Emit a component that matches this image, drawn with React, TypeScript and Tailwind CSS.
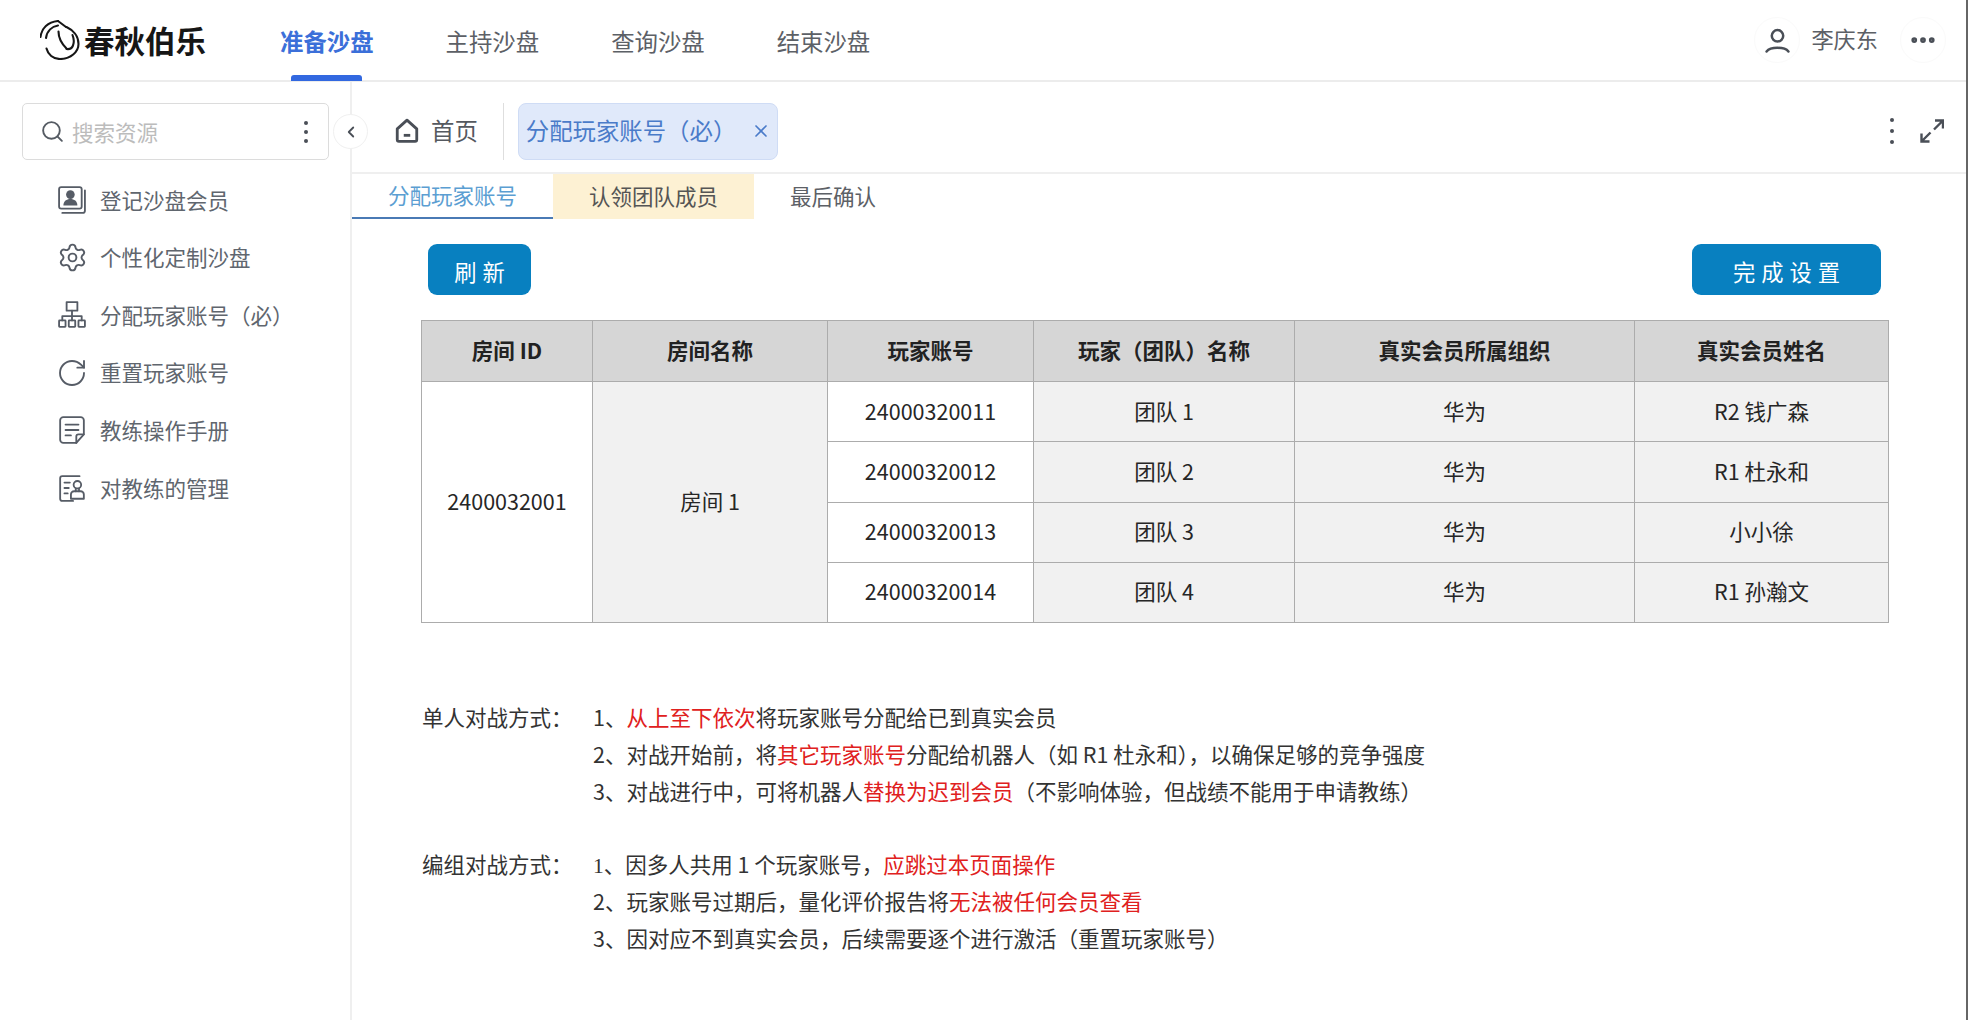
import { RotateCw, Search, Settings, X, ChevronLeft, MoreHorizontal } from "lucide-react";
import type { ReactNode } from "react";

const NAV_ITEMS = ["准备沙盘", "主持沙盘", "查询沙盘", "结束沙盘"];

function IconFrame({ children }: { children: ReactNode }) {
  return (
    <svg
      viewBox="0 0 26 26"
      fill="none"
      stroke="currentColor"
      strokeWidth="1.700"
      strokeLinecap="round"
      strokeLinejoin="round"
      className="h-[28px] w-[28px] shrink-0"
    >
      {children}
    </svg>
  );
}

const MENU_ITEMS: { label: string; icon: ReactNode }[] = [
  {
    label: "登记沙盘会员",
    icon: (
      <IconFrame>
        <rect x="1" y="1" width="21" height="20" rx="2" />
        <path d="M25 4v19a2 2 0 0 1-2 2H4" />
        <circle cx="11.5" cy="8" r="4" fill="currentColor" stroke="none" />
        <path d="M5 18c0-4 3-6 6.500-6s6.500 2 6.500 6z" fill="currentColor" stroke="none" />
      </IconFrame>
    ),
  },
  { label: "个性化定制沙盘", icon: <Settings size={31} strokeWidth={1.500} className="shrink-0" /> },
  {
    label: "分配玩家账号（必）",
    icon: (
      <IconFrame>
        <rect x="8" y="1" width="10" height="8" />
        <path d="M13 9v9M4 18v-4h18v4" />
        <rect x="1" y="18" width="6" height="6" rx="0.500" />
        <rect x="10" y="18" width="6" height="6" rx="0.500" />
        <rect x="19" y="18" width="6" height="6" rx="0.500" />
      </IconFrame>
    ),
  },
  { label: "重置玩家账号", icon: <RotateCw size={32} strokeWidth={1.400} className="shrink-0" /> },
  {
    label: "教练操作手册",
    icon: (
      <IconFrame>
        <path d="M5 1h16a3 3 0 0 1 3 3v13l-7 8H5a3 3 0 0 1-3-3V4a3 3 0 0 1 3-3z" />
        <path d="M7 8h12M7 13h12M7 18h5M24 17h-5a2 2 0 0 0-2 2v6" />
      </IconFrame>
    ),
  },
  {
    label: "对教练的管理",
    icon: (
      <IconFrame>
        <path d="M20 2H4a2 2 0 0 0-2 2v19a2 2 0 0 0 2 2h10" />
        <path d="M6 8h5M6 13h4M6 18h3" />
        <circle cx="18" cy="10" r="3.500" />
        <path d="M16.500 13.500V16M19.500 13.500V16" />
        <path d="M12 23v-4a3 3 0 0 1 3-3h6a3 3 0 0 1 3 3v4z" />
      </IconFrame>
    ),
  },
];

const ROWS = [
  { account: "24000320011", team: "团队 1", org: "华为", name: "R2 钱广森" },
  { account: "24000320012", team: "团队 2", org: "华为", name: "R1 杜永和" },
  { account: "24000320013", team: "团队 3", org: "华为", name: "小小徐" },
  { account: "24000320014", team: "团队 4", org: "华为", name: "R1 孙瀚文" },
];

const HEADERS = [
  { title: "房间 ID", width: "w-[171px]" },
  { title: "房间名称", width: "w-[235px]" },
  { title: "玩家账号", width: "w-[206px]" },
  { title: "玩家（团队）名称", width: "w-[261px]" },
  { title: "真实会员所属组织", width: "w-[340px]" },
  { title: "真实会员姓名", width: "w-[254px]" },
];

function Logo() {
  return (
    <div className="flex items-center gap-[4px] text-[#161616]">
      <svg viewBox="0 0 40 40" fill="none" stroke="currentColor" strokeWidth="2.100" strokeLinecap="round" strokeLinejoin="round" className="h-[40px] w-[40px]">
        <path d="M0.500 17C1.500 8 8 2 18 1" />
        <path d="M6 18C7 11 12 6.500 18 5.500" />
        <path d="M18 1l8 6" />
        <path d="M26.500 7C33 10 38.500 16 38.500 24c0 8-8 15-18.500 15C13 39 8 34.500 6.500 28.500" />
        <path d="M18.500 11.500c0 6 3 12 8 17" />
        <path d="M32.500 15c1.500 4 1.500 8 .5 10.500-1 2.500-3.500 4-6.500 3.500" />
      </svg>
      <span className="text-[30.500px] leading-none font-semibold">春秋伯乐</span>
    </div>
  );
}

function Dots({ gap }: { gap: string }) {
  return (
    <span className={`flex flex-col items-center ${gap}`}>
      <span className="h-[4px] w-[4px] rounded-full bg-current" />
      <span className="h-[4px] w-[4px] rounded-full bg-current" />
      <span className="h-[4px] w-[4px] rounded-full bg-current" />
    </span>
  );
}

function Header() {
  return (
    <header className="flex h-[82px] shrink-0 items-center border-b-2 border-[#ececec] pr-[20px] pl-[40px]">
      <Logo />
      <nav className="ml-[74px] flex h-full gap-[72px]">
        {NAV_ITEMS.map((item, i) => (
          <div
            key={item}
            className={`relative flex h-full items-center pt-[4px] text-[23.400px] ${
              i === 0 ? "font-bold text-[#3b6fd9]" : "text-[#5c6066]"
            }`}
          >
            {item}
            {i === 0 && (
              <span className="absolute -bottom-[1px] left-[11px] h-[6px] w-[71px] rounded-t-[3px] bg-[#3268e0]" />
            )}
          </div>
        ))}
      </nav>
      <div className="ml-auto flex items-center">
        <div className="flex h-[46px] w-[46px] items-center justify-center rounded-full border border-[#fafafa] text-[#4a4f57]">
          <svg viewBox="0 0 24 24" fill="none" stroke="currentColor" strokeWidth="2.400" strokeLinecap="round" className="h-[25px] w-[25px]">
            <circle cx="12" cy="7.500" r="5.500" />
            <path d="M1.500 22.500c2-2.500 5.500-3.500 10.500-3.500s8.500 1 10.500 3.500" />
          </svg>
        </div>
        <span className="ml-[11px] pb-[2px] text-[22.200px] text-[#5c6066]">李庆东</span>
        <div className="ml-[22px] flex h-[46px] w-[46px] items-center justify-center rounded-full border border-[#fafafa] text-[#4a4f57]">
          <MoreHorizontal size={30} strokeWidth={2.600} />
        </div>
      </div>
    </header>
  );
}

function Sidebar() {
  return (
    <aside className="relative w-[352px] shrink-0 border-r-2 border-[#efefef] pt-[21px]">
      <div className="ml-[22px] flex h-[57px] w-[307px] items-center rounded-[5px] border border-[#dcdcdc] pr-[20px] pl-[17px] text-[21.500px] text-[#bcbcbc]">
        <Search size={25} strokeWidth={1.800} className="text-[#555b63]" />
        <span className="ml-[7px] pt-[2px]">搜索资源</span>
        <span className="ml-auto text-[#4a4f57]">
          <Dots gap="gap-[5px]" />
        </span>
      </div>
      <ul className="mt-[11px]">
        {MENU_ITEMS.map((item) => (
          <li key={item.label} className="flex h-[57.600px] items-center text-[21.500px] text-[#60666e]">
            <span className="ml-[58px] flex w-[28px] items-center justify-center text-[#565c66]">{item.icon}</span>
            <span className="ml-[14px]">{item.label}</span>
          </li>
        ))}
      </ul>
      <button className="absolute top-[32px] -right-[18px] flex h-[35px] w-[35px] items-center justify-center rounded-full border border-[#f0f0f0] bg-white text-[#4a4f57]">
        <ChevronLeft size={18} strokeWidth={2.400} />
      </button>
    </aside>
  );
}

function TitleBar() {
  return (
    <div className="flex h-[92px] shrink-0 items-center border-b-2 border-[#efefef] pt-[8px] pr-[22px]">
      <div className="ml-[42px] flex items-center text-[#4a4f57]">
        <svg viewBox="0 0 24 24" fill="none" stroke="currentColor" strokeWidth="2.600" strokeLinejoin="round" className="h-[26px] w-[26px]">
          <path d="M3 10l9-8 9 8v10a1.500 1.500 0 0 1-1.500 1.500h-15A1.500 1.500 0 0 1 3 20z" />
          <path d="M9 16h6" />
        </svg>
        <span className="ml-[11px] text-[23.400px] text-[#55595f]">首页</span>
      </div>
      <div className="ml-[25px] h-[57px] w-px bg-[#dedede]" />
      <div className="ml-[14px] flex h-[57px] w-[260px] items-center rounded-[8px] border border-[#cfdcf5] bg-[#e0e9fa] pr-[6px] pl-[7px] text-[#4a7bc9]">
        <span className="text-[23.400px]">分配玩家账号（必）</span>
        <X size={20} strokeWidth={2} className="ml-auto" />
      </div>
      <div className="ml-auto flex items-center gap-[26px] text-[#4a4f57]">
        <Dots gap="gap-[7px]" />
        <svg viewBox="0 0 24 24" fill="none" stroke="currentColor" strokeWidth="2.400" className="h-[24px] w-[24px]">
          <path d="M15 1.500h8v8M23 1.500l-9 9" />
          <path d="M1.500 14.500v8h8M1.500 22.500l9-9" />
        </svg>
      </div>
    </div>
  );
}

function StepTabs() {
  return (
    <div className="flex h-[45px] shrink-0 text-[21.500px]">
      <div className="flex items-center border-b-2 border-[#4a7ab5] px-[36px] text-[#5b9ed2]">分配玩家账号</div>
      <div className="flex items-center bg-[#fdf1d3] px-[36px] text-[#555]">认领团队成员</div>
      <div className="flex items-center px-[36px] text-[#5c6066]">最后确认</div>
    </div>
  );
}

function Actions() {
  return (
    <div className="mt-[25px] flex h-[51px] justify-between pr-[85px] pl-[76px] text-[22.300px] text-white">
      <button className="flex w-[103px] items-center justify-center rounded-[9px] bg-[#0880c0] pt-[4px] pl-[6px] tracking-[6px]">
        刷新
      </button>
      <button className="flex w-[189px] items-center justify-center rounded-[9px] bg-[#0880c0] pt-[4px] pl-[6px] tracking-[6px]">
        完成设置
      </button>
    </div>
  );
}

function RoomTable() {
  const cell = "border border-[#acacac] pb-[2px] text-center";
  return (
    <table className="mt-[25px] ml-[69px] w-[1467px] table-fixed border-collapse text-[21.500px] text-[#262626]">
      <thead>
        <tr className="h-[61px] bg-[#d6d6d6]">
          {HEADERS.map((h) => (
            <th key={h.title} className={`${cell} ${h.width} font-bold text-[#222]`}>
              {h.title}
            </th>
          ))}
        </tr>
      </thead>
      <tbody>
        {ROWS.map((row, i) => (
          <tr key={row.account} className="h-[60.250px]">
            {i === 0 && (
              <>
                <td rowSpan={4} className={`${cell} bg-white`}>2400032001</td>
                <td rowSpan={4} className={`${cell} bg-[#f1f1f1]`}>房间 1</td>
              </>
            )}
            <td className={`${cell} bg-white`}>{row.account}</td>
            <td className={`${cell} bg-[#f1f1f1]`}>{row.team}</td>
            <td className={`${cell} bg-[#f1f1f1]`}>{row.org}</td>
            <td className={`${cell} bg-[#f1f1f1]`}>{row.name}</td>
          </tr>
        ))}
      </tbody>
    </table>
  );
}

function Red({ children }: { children: ReactNode }) {
  return <span className="text-[#e02020]">{children}</span>;
}

function NoteGroup({ label, children }: { label: string; children: ReactNode }) {
  return (
    <div className="flex">
      <div className="w-[171px] shrink-0">{label}</div>
      <div>{children}</div>
    </div>
  );
}

function Notes() {
  return (
    <div className="mt-[75px] ml-[70px] flex flex-col gap-[36px] text-[21.500px] leading-[37px] text-[#333]">
      <NoteGroup label="单人对战方式：">
        <p>1、<Red>从上至下依次</Red>将玩家账号分配给已到真实会员</p>
        <p>2、对战开始前，将<Red>其它玩家账号</Red>分配给机器人（如 R1 杜永和），以确保足够的竞争强度</p>
        <p>3、对战进行中，可将机器人<Red>替换为迟到会员</Red>（不影响体验，但战绩不能用于申请教练）</p>
      </NoteGroup>
      <NoteGroup label="编组对战方式：">
        <p><span className="font-['Liberation_Serif',serif] leading-none">1</span>、因多人共用 1 个玩家账号，<Red>应跳过本页面操作</Red></p>
        <p>2、玩家账号过期后，量化评价报告将<Red>无法被任何会员查看</Red></p>
        <p>3、因对应不到真实会员，后续需要逐个进行激活（重置玩家账号）</p>
      </NoteGroup>
    </div>
  );
}

export default function App() {
  return (
    <div className="flex h-[1020px] w-[1968px] flex-col overflow-hidden border-r-2 border-[#666] bg-white font-['Noto_Sans_CJK_SC','Noto_Sans',sans-serif]">
      <Header />
      <div className="flex min-h-0 flex-1">
        <Sidebar />
        <main className="min-w-0 flex-1">
          <TitleBar />
          <StepTabs />
          <Actions />
          <RoomTable />
          <Notes />
        </main>
      </div>
    </div>
  );
}
